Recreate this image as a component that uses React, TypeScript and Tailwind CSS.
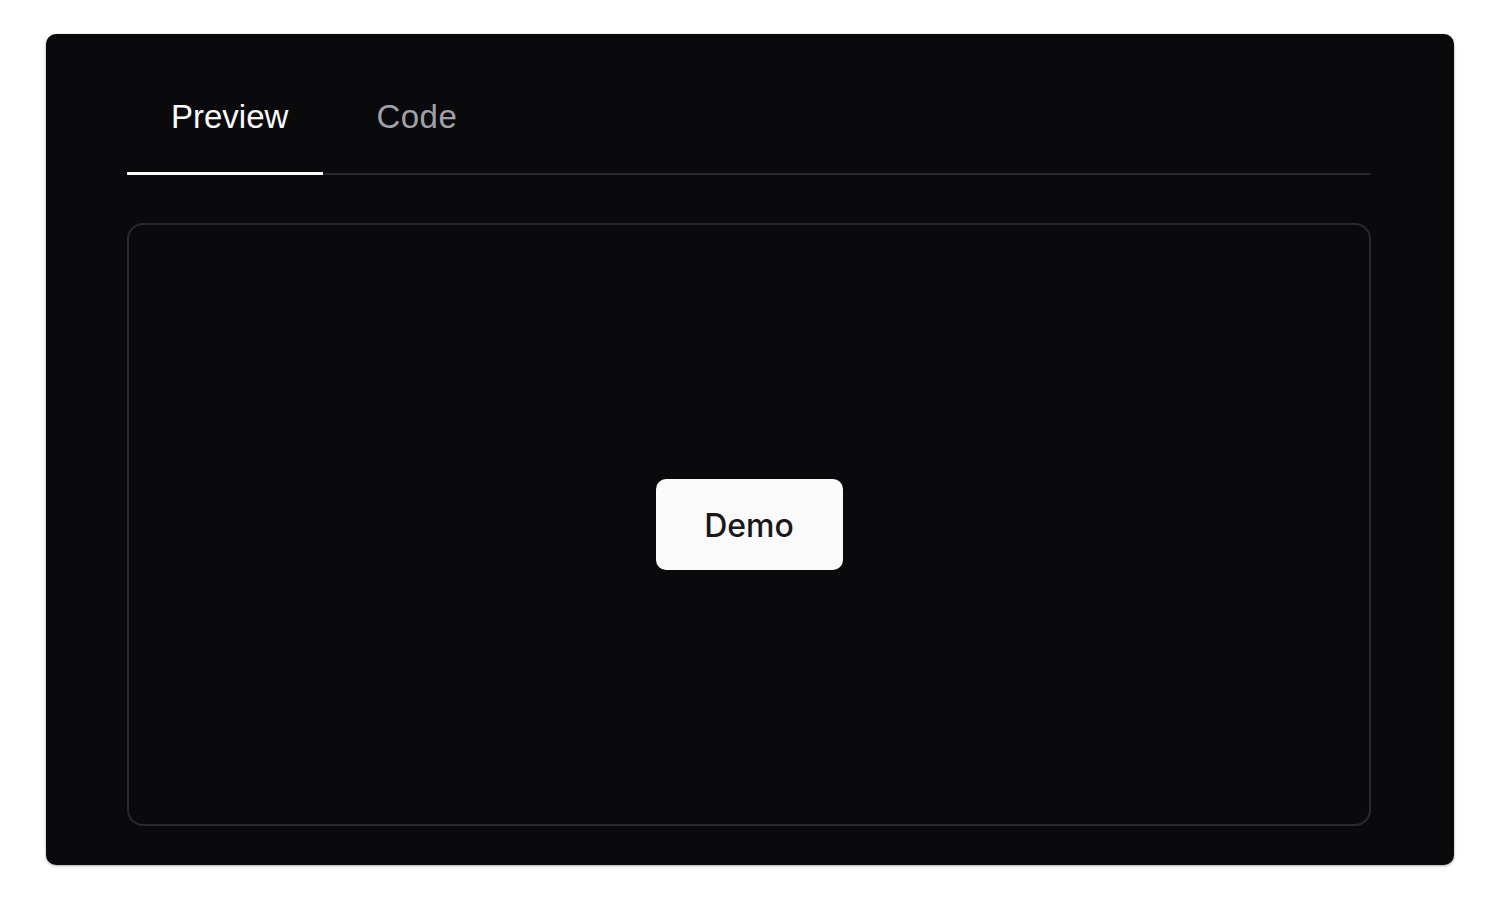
import React, { useState } from 'react';

const App: React.FC = () => {
  const [tab, setTab] = useState<'preview' | 'code'>('preview');

  return (
    <div className="min-h-screen bg-white px-[46px] pt-[34px]" style={{ fontFamily: '"Liberation Sans", Arial, sans-serif' }}>
      <div className="bg-[#0a0a0c] rounded-[10px] shadow-[0_1px_3px_rgba(0,0,0,0.35)] pl-[81px] pr-[83px] pt-[47px] pb-[39px]">
        <div className="flex border-b-2 border-[#27272a]">
          <button
            onClick={() => setTab('preview')}
            className={`-mb-[2px] pl-[44px] pr-[35px] pt-[16px] pb-[35px] text-[33px] leading-[40px] border-b-[3px] ${tab === 'preview' ? 'text-[#fafafa] border-[#fafafa]' : 'text-[#a1a1aa] border-transparent'}`}
          >
            Preview
          </button>
          <button
            onClick={() => setTab('code')}
            className={`-mb-[2px] pl-[53px] pr-[40px] pt-[16px] pb-[35px] text-[33px] leading-[40px] tracking-[0.5px] border-b-[3px] ${tab === 'code' ? 'text-[#fafafa] border-[#fafafa]' : 'text-[#a1a1aa] border-transparent'}`}
          >
            Code
          </button>
        </div>

        <div className="mt-[48px] h-[603px] border-2 border-[#2a2a2e] rounded-[16px] flex items-center justify-center">
          {tab === 'preview' ? (
            <button
              className="w-[187px] h-[91px] bg-[#fafafa] rounded-[10px] text-[#18181b] text-[32px] font-medium pt-[2px]"
              style={{ fontFamily: 'Inter, "Liberation Sans", sans-serif' }}
            >
              Demo
            </button>
          ) : (
            <pre className="text-[#a1a1aa] text-lg" style={{ fontFamily: '"Liberation Mono", monospace' }}>{'<Button>Demo</Button>'}</pre>
          )}
        </div>
      </div>
    </div>
  );
};

export default App;
